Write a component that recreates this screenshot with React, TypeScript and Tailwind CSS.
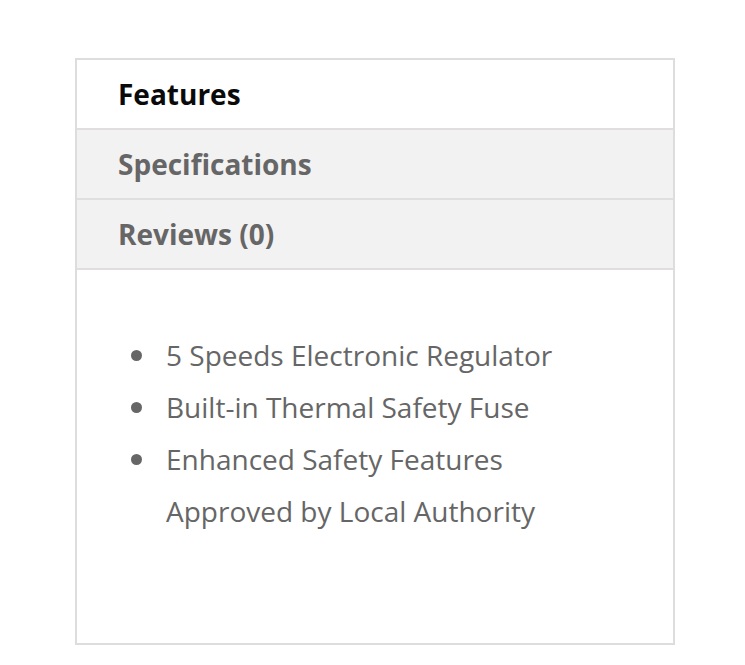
import React from "react";

export default function App() {
  const items = [
    "5 Speeds Electronic Regulator",
    "Built-in Thermal Safety Fuse",
    "Enhanced Safety Features Approved by Local Authority",
  ];
  return (
    <div
      className="w-[745px] h-[665px] bg-white pt-[58px] pl-[75px]"
      style={{ fontFamily: '"Open Sans", sans-serif' }}
    >
      <div className="w-[600px] h-[587px] border-2 border-[#dddddd] flex flex-col">
        <div className="h-[70px] border-b-2 border-[#e0dede] bg-white flex items-center pl-[41px]">
          <span className="text-[28px] font-bold text-[#0a0a0a]">Features</span>
        </div>
        <div className="h-[70px] border-b-2 border-[#e0dede] bg-[#f3f2f2] flex items-center pl-[41px]">
          <span className="text-[28px] font-bold text-[#666666]">Specifications</span>
        </div>
        <div className="h-[70px] border-b-2 border-[#e0dede] bg-[#f3f2f2] flex items-center pl-[41px]">
          <span className="text-[28px] font-bold text-[#666666]">Reviews (0)</span>
        </div>
        <div className="pt-[59px] pl-[54px]">
          <ul className="w-[460px]">
            {items.map((t) => (
              <li key={t} className="flex text-[28px] leading-[52px] text-[#666666]">
                <span className="w-[35px] shrink-0 flex items-start pt-[21px]">
                  <span className="block w-[11px] h-[11px] rounded-full bg-[#666666]" />
                </span>
                <span>{t}</span>
              </li>
            ))}
          </ul>
        </div>
      </div>
    </div>
  );
}
